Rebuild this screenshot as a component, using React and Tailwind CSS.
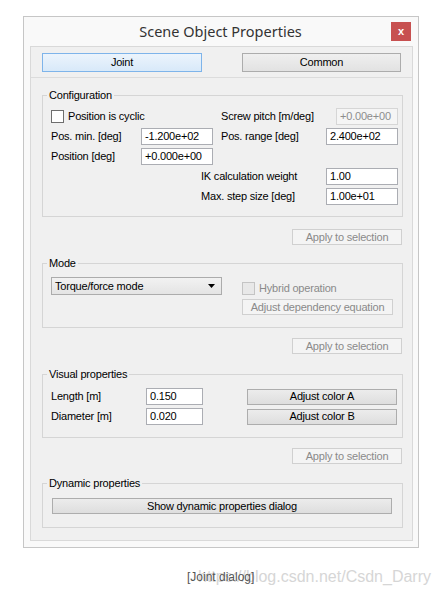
import React from "react";

const F = { fontFamily: '"Liberation Sans", Arial, sans-serif' };

function Input({ value, w, disabled }) {
  return (
    <div
      className={
        "h-[17px] border pl-[3px] leading-[15px] whitespace-nowrap " +
        (disabled
          ? "border-[#d6d6d6] bg-[#f5f5f5] text-[#8d8d8d]"
          : "border-[#abadb3] bg-white text-black")
      }
      style={{ width: w }}
    >
      {value}
    </div>
  );
}

function Btn({ children, w, h = 16, disabled, className = "" }) {
  return (
    <div
      className={
        "flex items-center justify-center border leading-none whitespace-nowrap " +
        (disabled
          ? "border-[#d0d0d0] bg-[#f4f4f4] text-[#8a8a8a] "
          : "border-[#adadad] bg-gradient-to-b from-[#ececec] to-[#dedede] text-black ") +
        className
      }
      style={{ width: w, height: h }}
    >
      {children}
    </div>
  );
}

function Check({ disabled }) {
  return (
    <div
      className={
        "h-[13px] w-[13px] border " +
        (disabled ? "border-[#c4c4c4] bg-[#e8e8e8]" : "border-[#6e6e6e] bg-white")
      }
    />
  );
}

function Group({ title, children, className = "" }) {
  return (
    <fieldset className={"ml-[11px] w-[361px] border border-[#d5d5d5] " + className}>
      <legend className="ml-[4px] px-[2px] text-[11px] leading-[13px] text-black">{title}</legend>
      {children}
    </fieldset>
  );
}

export default function App() {
  return (
    <div className="min-h-[595px] w-[442px] bg-white" style={F}>
      <div className="h-[16px]" />
      {/* window */}
      <div className="ml-[23px] flex h-[532px] w-[396px] flex-col border border-[#c6c6c6] bg-[#f9f9f9]">
        {/* title bar */}
        <div className="flex h-[29px] items-start">
          <div className="flex h-[29px] flex-1 items-center justify-center pl-[26px] text-[14.5px] text-[#333]" style={{ fontFamily: '"Noto Sans", "Open Sans", sans-serif' }}>
            Scene Object Properties
          </div>
          <div className="mr-[7px] mt-[5px] flex h-[19px] w-[20px] items-center justify-center bg-[#c75050] text-[11px] font-bold leading-none text-white">
            x
          </div>
        </div>
        {/* panel */}
        <div className="ml-[6px] h-[495px] w-[383px] overflow-hidden border border-[#d9d9d9] bg-[#f0f0f0] text-[11px] tracking-[-0.2px]">
          <div className="flex justify-between pl-[11px] pr-[11px] pt-[6px]">
            <div className="flex h-[19px] w-[160px] items-center justify-center border border-[#7eb4ea] bg-gradient-to-b from-[#ecf4fc] to-[#d8e9f9] text-black">
              Joint
            </div>
            <div className="flex h-[19px] w-[159px] items-center justify-center border border-[#acacac] bg-gradient-to-b from-[#efefef] to-[#e2e2e2] text-black">
              Common
            </div>
          </div>
          <div className="mt-[5px] h-px bg-[#dcdcdc]" />

          {/* Configuration */}
          <Group title="Configuration" className="mt-[11px]">
            <div className="flex flex-col gap-[3px] pb-[11px] pt-[6px] text-black">
              <div className="flex h-[17px] items-center">
                <div className="ml-[8px] flex w-[170px] items-center gap-[4px]">
                  <Check />
                  <span>Position is cyclic</span>
                </div>
                <div className="w-[115px]">Screw pitch [m/deg]</div>
                <Input value="+0.00e+00" w={62} disabled />
              </div>
              <div className="flex h-[17px] items-center">
                <div className="w-[98px] pl-[8px]">Pos. min. [deg]</div>
                <Input value="-1.200e+02" w={72} />
                <div className="w-[113px] pl-[8px]">Pos. range [deg]</div>
                <Input value="2.400e+02" w={72} />
              </div>
              <div className="flex h-[17px] items-center">
                <div className="w-[98px] pl-[8px]">Position [deg]</div>
                <Input value="+0.000e+00" w={72} />
              </div>
              <div className="flex h-[17px] items-center">
                <div className="w-[283px] pl-[158px]">IK calculation weight</div>
                <Input value="1.00" w={72} />
              </div>
              <div className="flex h-[17px] items-center">
                <div className="w-[283px] pl-[158px]">Max. step size [deg]</div>
                <Input value="1.00e+01" w={72} />
              </div>
            </div>
          </Group>

          <div className="mr-[10px] mt-[12px] flex justify-end">
            <Btn w={110} disabled>Apply to selection</Btn>
          </div>

          {/* Mode */}
          <Group title="Mode" className="mt-[12px]">
            <div className="flex pb-[12px] pl-[8px] pt-[7px]">
              <div className="flex h-[18px] w-[171px] items-center justify-between border border-[#acacac] bg-gradient-to-b from-[#f2f2f2] to-[#e4e4e4] pl-[3px] pr-[6px] text-black">
                <span>Torque/force mode</span>
                <svg width="7" height="4" viewBox="0 0 7 4">
                  <path d="M0 0H7L3.5 4Z" fill="#000" />
                </svg>
              </div>
              <div className="ml-[20px] flex flex-col pt-[4px]">
                <div className="flex h-[14px] items-center gap-[4px] text-[#8a8a8a]">
                  <Check disabled />
                  <span>Hybrid operation</span>
                </div>
                <Btn w={151} disabled className="mt-[4px]">Adjust dependency equation</Btn>
              </div>
            </div>
          </Group>

          <div className="mr-[10px] mt-[10px] flex justify-end">
            <Btn w={110} disabled>Apply to selection</Btn>
          </div>

          {/* Visual properties */}
          <Group title="Visual properties" className="mt-[14px]">
            <div className="flex flex-col gap-[3px] pb-[12px] pt-[7px] text-black">
              <div className="flex h-[17px] items-center">
                <div className="w-[103px] pl-[8px]">Length [m]</div>
                <Input value="0.150" w={57} />
                <Btn w={150} className="ml-[44px]">Adjust color A</Btn>
              </div>
              <div className="flex h-[17px] items-center">
                <div className="w-[103px] pl-[8px]">Diameter [m]</div>
                <Input value="0.020" w={57} />
                <Btn w={150} className="ml-[44px]">Adjust color B</Btn>
              </div>
            </div>
          </Group>

          <div className="mr-[10px] mt-[10px] flex justify-end">
            <Btn w={110} disabled>Apply to selection</Btn>
          </div>

          {/* Dynamic properties */}
          <Group title="Dynamic properties" className="mt-[13px]">
            <div className="pb-[13px] pl-[9px] pt-[8px]">
              <Btn w={340}>Show dynamic properties dialog</Btn>
            </div>
          </Group>
        </div>
      </div>

      {/* caption */}
      <div className="relative mt-[22px] h-[16px]">
        <div className="absolute right-[11px] top-[-2px] whitespace-nowrap text-[16px] leading-[18px] text-[#d6d6d6]" style={F}>
          https://blog.csdn.net/Csdn_Darry
        </div>
        <div className="relative ml-[187px] whitespace-nowrap text-[12px] leading-[14px] text-[#555]" style={F}>
          [Joint dialog]
        </div>
      </div>
    </div>
  );
}
